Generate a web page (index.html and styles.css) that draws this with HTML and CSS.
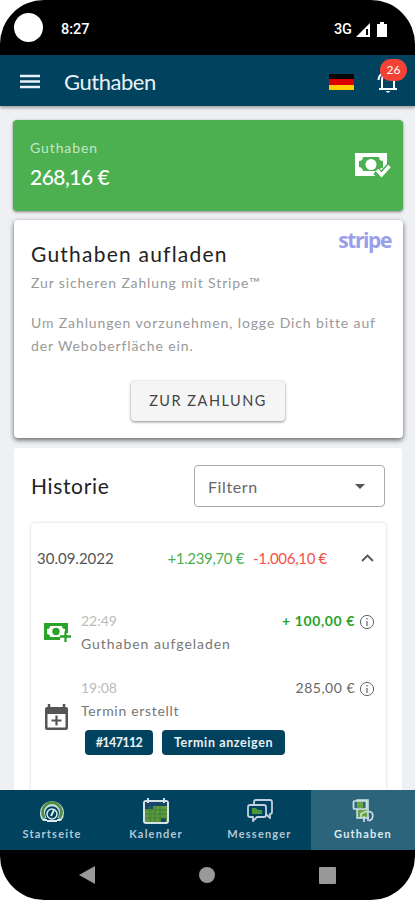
FILE: index.html
```html
<!DOCTYPE html>
<html lang="de">
<head>
<meta charset="utf-8">
<title>Guthaben</title>
<link rel="stylesheet" href="styles.css">
</head>
<body>
<div class="phone">
  <div class="status">
    <span class="camera"></span><span class="clock">8:27</span>
    <span class="network">3G</span>
    <svg class="signal" width="14" height="14" viewBox="0 0 14 14"><path d="M0 14 14 0v14z" fill="#fff"/><path d="M10 6h2v6h-2z" fill="#000"/></svg>
    <svg class="battery" width="10" height="15" viewBox="0 0 10 15"><path d="M3 0h4v2h3v13H0V2h3z" fill="#fff"/></svg>
  </div>
  <header class="appbar">
    <svg width="20" height="15" viewBox="0 0 20 15"><path d="M0 2h20M0 7.5h20M0 13h20" stroke="#e8f0f8" stroke-width="2.6"/></svg>
    <h1 class="apptitle">Guthaben</h1>
    <span class="flag"><i class="black"></i><i class="red"></i><i class="gold"></i></span>
    <div class="bell">
      <svg width="22" height="22" viewBox="0 0 22 22" fill="none" stroke="#fff" stroke-width="2"><path d="M5 17V9c0-4 2-6 6-6s6 2 6 6v8M2 18h18M1.500 9c0-3 1-4.500 3-6"/><path d="M8.500 20h5l-2.500 2z" fill="#fff" stroke="none"/></svg>
      <span class="badge">26</span>
    </div>
  </header>
  <main class="content">
    <section class="balance">
      <div><div class="balance-label">Guthaben</div><div class="balance-value">268,16 €</div></div>
      <svg width="37" height="26" viewBox="0 0 37 26"><path d="M0 1h32v23H0z" fill="#fff"/><path d="M8 5h16c0 3 2 4 4 4v7c-3 0-4 1-4 3H8c0-2-2-4-4-4V9c2 0 4-1 4-4z" fill="#4caf50"/><circle cx="16" cy="12.500" r="5.500" fill="#fff"/><path d="m21 19 5.500 5 9-10" fill="none" stroke="#4caf50" stroke-width="8"/><path d="m22 18 4.500 5 8-9" fill="none" stroke="#fff" stroke-width="3.400"/></svg>
    </section>
    <section class="topup">
      <div class="topup-head"><h2 class="heading topup-title">Guthaben aufladen</h2><span class="stripe">stripe</span></div>
      <p class="sub">Zur sicheren Zahlung mit Stripe™</p>
      <p class="hint">Um Zahlungen vorzunehmen, logge Dich bitte auf<br>der Weboberfläche ein.</p>
      <button class="pay">ZUR ZAHLUNG</button>
    </section>
    <section class="history">
      <div class="history-head">
        <h2 class="heading history-title">Historie</h2>
        <div class="select"><span>Filtern</span><svg width="10" height="5" viewBox="0 0 10 5"><path d="M0 0h10L5 5z" fill="#555"/></svg></div>
      </div>
      <div class="panel">
        <div class="day"><span class="date">30.09.2022</span><span class="plus">+1.239,70 €</span><span class="minus">-1.006,10 €</span><svg width="13" height="8" viewBox="0 0 13 8"><path d="m1 7 5.500-5.500L12 7" fill="none" stroke="#555" stroke-width="1.800"/></svg></div>
        <div class="entry">
          <svg class="entry-icon cash" width="27" height="20" viewBox="0 0 27 20"><path fill-rule="evenodd" d="M0 0h24v17H0zM6 3c0 2-1 3-3 3v5c2 0 3 1 3 3h12c0-2 1-3 3-3V6c-2 0-3-1-3-3z" fill="#29a329"/><circle cx="12" cy="8.500" r="3.700" fill="#29a329"/><path d="M16 10h10v9H16z" fill="#fff"/><path d="M21.500 8.500v10.500M16 13.500h11" stroke="#29a329" stroke-width="2.300"/></svg>
          <div class="entry-body"><div class="row"><span class="time">22:49</span><span class="amount gain">+ 100,00 €</span><svg class="info" width="16" height="16" viewBox="0 0 16 16" fill="none" stroke="#666"><circle cx="8" cy="8" r="6.600"/><path d="M8 7v5M8 4v1.500" stroke-width="1.200"/></svg></div><div class="desc">Guthaben aufgeladen</div></div>
        </div>
        <div class="entry second">
          <svg class="entry-icon calendar" width="25" height="27" viewBox="0 0 25 27"><path d="M3 3h19q2 0 2 2v19q0 2-2 2H3q-2 0-2-2V5q0-2 2-2zM3.500 10v13.500h18V10z" fill="#555" fill-rule="evenodd"/><path d="M5 0v5M20 0v5" stroke="#555" stroke-width="2.500"/><path d="M12.500 11.500v10M7.500 16.500h10" stroke="#555" stroke-width="2.200"/></svg>
          <div class="entry-body"><div class="row"><span class="time">19:08</span><span class="amount cost">285,00 €</span><svg class="info" width="16" height="16" viewBox="0 0 16 16" fill="none" stroke="#666"><circle cx="8" cy="8" r="6.600"/><path d="M8 7v5M8 4v1.500" stroke-width="1.200"/></svg></div><div class="desc short">Termin erstellt</div>
          <div class="chips"><span class="chip c1">#147112</span><span class="chip c2">Termin anzeigen</span></div></div>
        </div>
      </div>
    </section>
  </main>
  <nav class="tabs">
    <div class="tab"><svg width="26" height="26" viewBox="0 0 26 26" fill="none"><path d="M5.500 21a9.500 9.500 0 1 1 15 0" stroke="#c3dce2" stroke-width="5"/><path d="M5.500 20a9.500 9.500 0 1 1 15 0" stroke="#4f8d3d" stroke-width="2.800"/><circle cx="13" cy="16" r="5" stroke="#dcebef" stroke-width="1.500"/><path d="m12 18 3-6M8 23h10M4 22h4M18 22h4" stroke="#dcebef" stroke-width="2"/></svg><span>Startseite</span></div>
    <div class="tab"><svg width="26" height="26" viewBox="0 0 26 26" fill="none"><rect x="1" y="3" width="24" height="22" rx="2" fill="#5b9a3d" stroke="#d5e2e8" stroke-width="2"/><path d="M2 4h22v4H2zM2 8h8v3H2zM18 20h5v4h-5z" fill="#174668"/><path d="M2 12h22M2 16h22M2 20h22M7 8v16M12 8v16M17 8v16" stroke="#427e3a"/><path d="M5 3h16M5 0v5M21 0v5" stroke="#d5e2e8" stroke-width="2"/></svg><span>Kalender</span></div>
    <div class="tab"><svg width="26" height="26" viewBox="0 0 26 26" fill="none" stroke="#c2d1df" stroke-width="1.800" stroke-linejoin="round"><path d="M7 6V4q0-2 2-2h14q2 0 2 2v10q0 2-2 2v4l-4-4"/><path d="M3 7h14q2 0 2 2v8q0 2-2 2h-7l-4 4v-4H3q-2 0-2-2V9q0-2 2-2z"/><path d="M5 16v-6h4l2 2h4v4z" fill="#4b963d" stroke="none"/></svg><span>Messenger</span></div>
    <div class="tab active"><svg width="26" height="26" viewBox="0 0 26 26" fill="none"><path d="M7 2h11v18H7z" fill="#67a53d" stroke="#d4e5ea" stroke-width="1.500"/><rect x="3.500" y="3" width="13" height="8" rx="1" fill="#34697b" stroke="#d4e5ea" stroke-width="1.700"/><path d="M7 4h6v6H7z" fill="#67a53d"/><path d="M11 20v-4q5-4 10-2 3 2 1 7l-3 2M14 24v-6M18 23v-5" stroke="#c4d7df" stroke-width="1.800"/></svg><span>Guthaben</span></div>
  </nav>
  <div class="system"><svg width="16" height="18" viewBox="0 0 16 18"><path d="M16 0v18L0 9z" fill="#999"/></svg><span class="home"></span><span class="recent"></span></div>
</div>
</body>
</html>
```
FILE: styles.css
```css
* { box-sizing: border-box; }
body { margin: 0; background: #fff; font-family: Lato, "Liberation Sans", sans-serif; white-space: nowrap; }
h1, h2, p { margin: 0; font-weight: 400; }
svg { display: block; flex: none; }
.phone { width: 415px; height: 900px; border-radius: 44px; overflow: hidden; background: #000; display: flex; flex-direction: column; }
.status { height: 55px; flex: none; display: flex; align-items: center; padding: 4px 28px 0 14px; color: #fff; font-family: Roboto, sans-serif; font-size: 14.500px; font-weight: 500; }
.camera { width: 29px; height: 29px; border-radius: 50%; background: #fff; margin: -5px 18px 0 0; }
.network { margin-left: auto; }
.signal { margin-left: 4px; }
.battery { margin-left: 7px; }
.appbar { height: 51px; flex: none; background: #01425e; display: flex; align-items: center; padding: 2px 12px 0 20px; color: #e6f2f8; box-shadow: 0 2px 3px #0005; z-index: 1; }
.apptitle { font-size: 22px; margin-left: 24px; letter-spacing: -.45px; line-height: 24px; }
.flag { width: 25px; height: 16px; margin-left: auto; display: grid; grid-template-rows: 5px 6px 5px; }
.black { background: #080808; }
.red { background: #dc0000; }
.gold { background: #ffce00; }
.bell { position: relative; margin-left: 23px; width: 26px; height: 22px; }
.badge { position: absolute; left: 3px; top: -12px; width: 27px; height: 22px; border-radius: 11px; background: #f44336; color: #fff; font-size: 12px; line-height: 22px; text-align: center; }
.content { flex: 1; min-height: 0; overflow: hidden; background: #eef0f4; padding: 14px 12px 0 13px; }
.balance { height: 91px; border-radius: 4px; background: #4caf50; display: flex; justify-content: space-between; padding: 18px 11px 0 17px; box-shadow: 0 1px 3px #0007; color: #fff; }
.balance svg { margin-top: 14px; }
.balance-label { font-size: 14px; line-height: 20px; color: #c4e6c5; letter-spacing: .9px; }
.balance-value { font-size: 21px; line-height: 26px; margin-top: 6px; font-weight: 500; letter-spacing: -.5px; }
.topup { height: 218px; margin: 9px 0 0 1px; border-radius: 4px; background: #fff; padding: 8px 12px 0 17px; box-shadow: 0 2px 5px #0009; }
.topup-head { display: flex; justify-content: space-between; height: 42px; }
.heading { font-size: 21px; line-height: 26px; color: #222; }
.topup-title { margin-top: 13px; letter-spacing: 1.22px; }
.stripe { font: 700 21px/24px "Open Sans", sans-serif; color: #9b9ee9; letter-spacing: -1.4px; }
.sub { font-size: 14px; line-height: 20px; margin-top: 3px; color: #999; letter-spacing: .86px; }
.hint { font-size: 14px; line-height: 23px; margin-top: 18px; color: #999; letter-spacing: .89px; }
.pay { display: block; width: 154px; height: 40px; margin: 24px 0 0 100px; border: 0; border-radius: 4px; background: #f5f5f5; color: #444; font: 400 14.500px/20px Lato, sans-serif; letter-spacing: 1.5px; padding: 0; box-shadow: 0 1px 3px #0007; }
.history { height: 360px; margin: 10px 1px 0 1px; border-radius: 3px; background: #fff; padding: 17px 17px 0; }
.history-head { height: 42px; display: flex; align-items: center; justify-content: space-between; }
.history-title { letter-spacing: .65px; }
.select { width: 191px; height: 42px; border: 1px solid #aaa; border-radius: 4px; display: flex; align-items: center; justify-content: space-between; padding: 0 19px 0 13px; color: #666; font-size: 16px; letter-spacing: .6px; }
.panel { height: 300px; width: 355px; margin-top: 16px; border-radius: 3px; box-shadow: 0 0 3px #0003; padding-top: 25px; }
.day { display: flex; align-items: center; height: 20px; padding: 0 12px 0 6px; font-size: 15px; color: #555; }
.plus { margin-left: auto; color: #4caf50; letter-spacing: -.35px; }
.minus { margin: 0 34px 0 9px; color: #f4514a; letter-spacing: -.3px; }
.entry { display: flex; margin-top: 42px; padding: 0 11px 0 13px; height: 44px; }
.entry-icon.cash { margin-top: 13px; }
.entry-icon.calendar { margin-top: 27px; }
.entry-body { margin-left: 10px; flex: 1; }
.second { margin-top: 23px; }
.second .entry-body { margin-left: 12px; }
.row { display: flex; align-items: center; height: 21px; }
.time { font-size: 14px; color: #bbb; }
.amount { margin-left: auto; font-size: 14px; color: #666; letter-spacing: .5px; }
.gain { color: #29a329; font-weight: 700; letter-spacing: .6px; }
.info { margin-left: 4px; margin-top: 2px; }
.desc { font-size: 14px; line-height: 21px; margin-top: 2px; color: #777; letter-spacing: .95px; }
.short { letter-spacing: .7px; }
.chips { display: flex; gap: 9px; margin: 9px 0 0 4px; }
.chip { height: 25px; border-radius: 4px; background: #01425e; color: #e8f1f5; font-size: 12.500px; line-height: 25px; text-align: center; font-weight: 700; }
.c1 { width: 68px; letter-spacing: -.6px; }
.c2 { width: 123px; letter-spacing: .6px; }
.tabs { height: 60px; flex: none; background: #01425e; display: grid; grid-template-columns: 104px 104px 103px 104px; z-index: 1; }
.tab { display: flex; flex-direction: column; align-items: center; padding-top: 8px; color: #b2c8d5; font-size: 11px; line-height: 14px; font-weight: 700; letter-spacing: 1.2px; gap: 3px; }
.active { background: #2c657b; color: #ddebf1; }
.system { height: 50px; display: flex; align-items: center; padding: 0 79px; justify-content: space-between; }
.home { width: 16px; height: 16px; border-radius: 50%; background: #999; }
.recent { width: 17px; height: 17px; border-radius: 1px; background: #999; }
```
